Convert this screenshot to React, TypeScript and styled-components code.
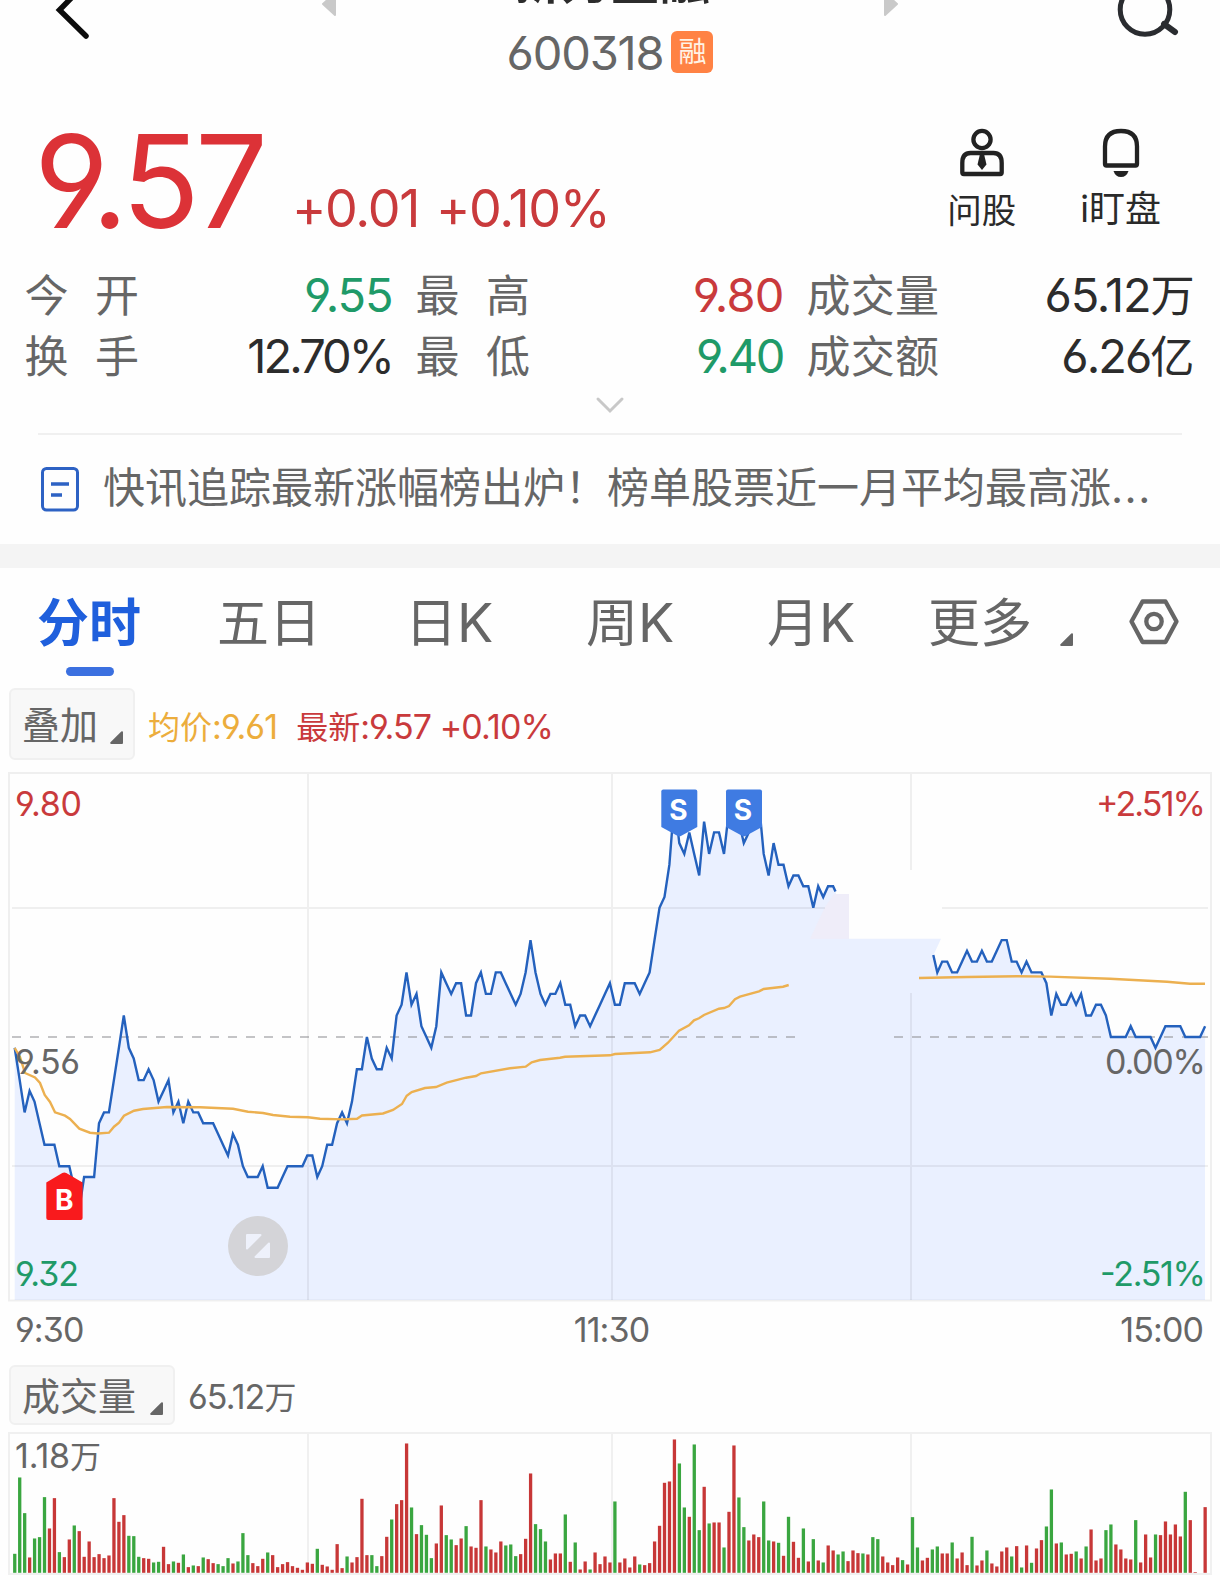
import React from 'react';
import styled, { createGlobalStyle } from 'styled-components';

const C = {
  red: '#dc3237',
  rise: '#c93a3c',
  fall: '#1f9a68',
  blue: '#1f5fdc',
  line: '#2461bd',
  text: '#666',
  dark: '#2c2c2c',
  grid: '#f0f0f0',
};

const Global = createGlobalStyle`
  * { box-sizing: border-box; }
  body {
    margin: 0;
    background: #fff;
    font-family: Inter, "Noto Sans CJK SC", sans-serif;
    font-feature-settings: "cv03", "cv04", "cv09";
    color: ${C.text};
  }
`;

const Screen = styled.main`
  width: 1220px;
  height: 1580px;
  overflow: hidden;
  background: #fefefe;
  display: flex;
  flex-direction: column;
  white-space: nowrap;
`;

/* ---------- header ---------- */
const Header = styled.header`
  height: 100px;
  display: grid;
  grid-template-columns: 321px 96px 1fr 96px 321px;
  flex: none;
`;
const HeaderIcon = styled.svg<{ $end?: boolean }>`
  display: block;
  justify-self: ${p => (p.$end ? 'end' : 'start')};
`;
const TitleBox = styled.div`
  display: flex;
  flex-direction: column;
  align-items: center;
`;
const Title = styled.h1`
  margin: -49px 0 0;
  font-size: 50px;
  line-height: 60px;
  font-weight: 600;
  color: ${C.dark};
`;
const CodeLine = styled.div`
  margin-top: 20px;
  display: flex;
  align-items: center;
  gap: 8px;
`;
const Code = styled.span`
  font-size: 47px;
  line-height: 44px;
  height: 42px;
  letter-spacing: -1.2px;
`;
const Badge = styled.span`
  width: 42px;
  height: 42px;
  border-radius: 6px;
  background: #ff8244;
  color: #fff3e6;
  font-size: 28px;
  line-height: 43px;
  text-align: center;
`;

/* ---------- quote ---------- */
const Quote = styled.section`
  height: 164px;
  flex: none;
  display: flex;
  padding: 0 59px 0 34px;
`;
const Price = styled.div`
  margin-top: 21px;
  font-size: 129px;
  line-height: 120px;
  letter-spacing: -5px;
  color: ${C.red};
`;
const Change = styled.div`
  margin: 79px 0 0 29px;
  display: flex;
  gap: 17px;
  font-size: 52px;
  line-height: 60px;
  letter-spacing: -1.3px;
  color: ${C.rise};
`;
const Actions = styled.div`
  margin-left: auto;
  display: flex;
  gap: 64px;
  padding-top: 28px;
`;
const Action = styled.div<{ $lift?: boolean }>`
  display: flex;
  flex-direction: column;
  align-items: center;
  gap: ${p => (p.$lift ? 12 : 14)}px;
  font-size: ${p => (p.$lift ? 36 : 34.5)}px;
  line-height: 40px;
  color: #2a2a2a;
`;

/* ---------- stats ---------- */
const Stats = styled.section`
  flex: none;
  display: grid;
  grid-template-columns: 367px 367px 387px;
  column-gap: 24px;
  grid-auto-rows: 60.5px;
  padding-left: 25px;
`;
const Stat = styled.div`
  display: flex;
  justify-content: space-between;
  font-size: 44px;
  line-height: 61px;
`;
const StatLabel = styled.span<{ $wide?: boolean }>`
  line-height: 65px;
  margin-left: -0.5px;
  letter-spacing: ${p => (p.$wide ? 26.5 : 0.3)}px;
`;
const StatValue = styled.span<{ $color?: string; $track?: number }>`
  font-size: 47px;
  letter-spacing: ${p => p.$track ?? -1}px;
  margin-right: ${p => -1 - (p.$track ?? -1) * 0.3}px;
  color: ${p => p.$color || C.dark};
`;
const Unit = styled.span`
  font-size: 0.94em;
  letter-spacing: 0;
`;
const Expand = styled.div`
  height: 48px;
  flex: none;
  display: flex;
  justify-content: center;
  padding: 10px 0 0;
`;
const News = styled.section`
  flex: none;
  height: 111px;
  margin: 0 38px;
  border-top: 2px solid #f0f0f0;
  display: flex;
  align-items: flex-start;
  padding: 32px 0 0 3px;
  gap: 24px;
  font-size: 42px;
`;
const NewsText = styled.span`
  line-height: 42px;
`;
const Dots = styled.span`
  letter-spacing: 1.5px;
`;
const Band = styled.div`
  height: 24px;
  flex: none;
  background: #f4f4f4;
`;

/* ---------- tabs ---------- */
const Tabs = styled.nav`
  height: 120px;
  flex: none;
  display: flex;
  align-items: flex-start;
  padding: 22px 0 0 37px;
`;
const Tab = styled.div<{ $w: number; $active?: boolean }>`
  width: ${p => p.$w}px;
  font-size: 52px;
  line-height: 68px;
  font-weight: ${p => (p.$active ? 700 : 400)};
  color: ${p => (p.$active ? C.blue : C.text)};
  &::after {
    content: '';
    display: ${p => (p.$active ? 'block' : 'none')};
    width: 48px;
    height: 9px;
    margin: 9px 0 0 29px;
    border-radius: 5px;
    background: #3b70e0;
  }
`;
const Letter = styled.span`
  font-size: 54px;
  line-height: 1;
`;
const CornerMark = styled.svg`
  display: block;
  flex: none;
`;
const TabCorner = styled.div`
  width: 69px;
  padding-top: 43px;
`;
const Settings = styled.div`
  padding-top: 9px;
`;

/* ---------- chart toolbars ---------- */
const Toolbar = styled.div<{ $h: number }>`
  flex: none;
  height: ${p => p.$h}px;
  display: flex;
  align-items: flex-start;
  padding-left: 9px;
`;
const Picker = styled.button<{ $w: number; $h: number }>`
  width: ${p => p.$w}px;
  height: ${p => p.$h}px;
  border: 2px solid #f0f0f0;
  border-radius: 6px;
  background: #f8f8f8;
  padding: 2px 10px 0 11px;
  display: flex;
  justify-content: space-between;
  align-items: center;
  font: inherit;
  font-size: 38px;
  line-height: 54px;
  color: ${C.text};
`;
const PickerMark = styled.span`
  padding-top: 24px;
`;
const Legend = styled.div<{ $top: number }>`
  display: flex;
  gap: 19px;
  margin: ${p => p.$top}px 0 0 13px;
  font-size: 34px;
  line-height: 40px;
  letter-spacing: -0.9px;
`;
const LegendItem = styled.span<{ $color?: string }>`
  color: ${p => p.$color || C.text};
`;
const Cjk = styled.span`
  font-size: 32px;
  letter-spacing: 0;
`;
const Plot = styled.svg`
  display: block;
  flex: none;
  text { font-size: 34px; }
  .mark { font-size: 28px; font-weight: 700; fill: #fff; }
`;
const Times = styled.div`
  flex: none;
  height: 59px;
  display: grid;
  grid-template-columns: 1fr auto 1fr;
  padding: 3px 17px 0 15px;
  font-size: 34px;
  line-height: 42px;
  letter-spacing: -0.9px;
`;
const Time = styled.span<{ $align?: string }>`
  text-align: ${p => p.$align || 'left'};
  padding-left: ${p => (p.$align === 'center' ? 5 : 0)}px;
`;

/* ---------- data ---------- */
const X0 = 14.7;
const STEP = 4.96;
const xAt = (i: number) => X0 + i * STEP;

/* price in cents relative to the 9.56 close, one value a minute */
const MORNING = [
  -1, -4, -7, -5, -6, -8, -10, -10, -10, -12, -12, -12, -14, -16, -13, -13, -13, -8, -7, -7, -4, -1, 2, -1, -2, -4, -4,
  -3, -4, -6, -5, -4, -7, -6, -8, -6, -7, -7, -8, -8, -8, -9, -10, -11, -9, -10, -12, -13, -13, -13, -12, -14, -14, -14,
  -13, -12, -12, -12, -12, -11, -11, -13, -12, -10, -10, -8, -7, -8, -6, -3, -3, 0, -2, -3, -3, -1, -2, 2, 3, 6, 3, 4,
  1, 0, -1, 1, 6, 5, 4, 5, 5, 2, 2, 5, 6, 4, 4, 6, 6, 5, 4, 3, 4, 6, 9, 6, 4, 3, 4, 4, 5, 3, 3, 1, 2, 2, 1, 2, 3, 4, 5,
  3, 3, 5, 5, 5, 4, 5, 6, 9, 12, 13, 16, 22, 18, 17, 19, 17, 15, 20, 17, 19, 19, 17, 21, 22, 20, 18, 19, 20, 22, 17, 15,
  18, 16, 16, 14, 15, 15, 14, 14, 12, 14, 13, 14, 14,
];
const LATE_START = 186;
const LATE = [
  6, 7, 7, 6, 6, 7, 8, 7, 7, 8, 7, 7, 8, 9, 9, 7, 7, 6, 7, 6, 6, 6, 5, 2, 4, 3, 3, 4, 3, 4, 2, 2, 3, 3, 2, 0, 0, 0, 0,
  1, 0, 0, 0, 0, -1, 0, 1, 1, 1, 1, 0, 0, 0, 0, 1,
];
const TOP = 760;
const yAt = (n: number) => 1037 - TOP - n * 10.77;
const pts = (v: number[], s = 0) => v.map((n, i) => `${xAt(i + s).toFixed(1)},${yAt(n).toFixed(1)}`).join(' ');

const AVG_LEFT: [number, number][] = [
  [14.7, 1048], [20, 1057], [25, 1073], [35, 1077.5], [40, 1083], [44.7, 1095], [50, 1102], [55, 1112.3], [65, 1115.7],
  [70, 1119], [79.3, 1128.7], [90, 1132.7], [98, 1133.5], [109, 1132.7], [114, 1126.7], [119, 1122.7], [124, 1115.7],
  [134, 1110.7], [143, 1109], [167, 1107], [200, 1107.3], [233, 1108.7], [248, 1111.7], [263, 1113], [273, 1115],
  [290, 1116.7], [308, 1117.3], [320, 1118.7], [343, 1119.4], [357, 1118.7], [362, 1115.5], [383, 1113.5], [393, 1110],
  [402, 1104], [406.7, 1095.7], [411.7, 1092], [425, 1088], [436, 1087], [446.7, 1082.7], [466, 1077.7], [476, 1076],
  [481, 1073.3], [510, 1068.3], [525.7, 1066.7], [531.7, 1062.3], [540, 1060], [560, 1057.7], [565, 1056.7],
  [610, 1055.3], [615, 1054], [650, 1052.3], [659.7, 1050], [668, 1042.7], [679, 1030.7], [689, 1025.3], [694, 1020.3],
  [699, 1018.3], [704, 1015], [719, 1008.7], [724, 1008], [729, 1006], [735, 999.3], [740, 996.7], [759, 991.3],
  [763.7, 989], [783, 986.7], [788.7, 985],
];
const AVG_RIGHT: [number, number][] = [
  [919, 978], [967, 977], [1017, 976.3], [1050, 976.6], [1110, 978.7], [1167, 981.7], [1190, 983.7], [1205, 983.7],
];
const path = (a: [number, number][]) => a.map(([x, y]) => `${x},${y - TOP}`).join(' ');

const BASE = 1300 - TOP;
const AREA = [
  `${X0},${BASE}`,
  pts(MORNING),
  path([[836, 893], [836, 894], [849, 894], [849, 938.7], [941, 938.7], [933.5, 955]]),
  pts(LATE, LATE_START),
  `1205,${BASE}`,
].join(' ');

/* traded volume a minute: bar height in thirds of a pixel, with g for a falling minute and r for a rising one */
const VOLUME = `57g 286g 179g 46r 103g 107g 227g 133r 224r 62g 47r 100r 142g 125r 48r 94r 47r 56r 44r 52r 224r 153r 173r
111g 110g 48g 44r 42r 31g 33g 78r 26r 34g 30r 55g 17r 22g 20r 46g 41r 29r 26g 20g 44g 28r 34g 119g 53g 29r 20r 42r 61g
53r 17r 26r 32r 20r 15r 9r 31r 27r 72g 24r 19r 9r 86r 14r 49g 31r 47r 222r 53r 53g 20g 50r 108r 160g 206r 218r 388r
196g 116r 143g 114g 44g 88r 202r 113g 100g 83r 103r 140g 79r 75r 218r 79g 70r 61r 94r 82g 85g 50g 56r 102r 298r 146g
131g 94g 40r 58r 58r 175g 33r 91g 10r 34r 10g 61r 26r 49r 31r 214g 31r 43r 16r 49r 25g 23r 29r 94r 141r 270r 274r 400r
328g 196g 168r 385g 128g 258r 148g 151r 151r 76g 183r 382r 226g 137g 97r 115r 107r 214g 97g 94r 90g 51r 168g 93r 45r
133g 34r 101g 37r 31g 82r 67r 55g 64g 35r 67r 59r 58g 55r 107g 101g 49r 31r 23r 46r 38g 25r 167g 76g 37r 45r 70g 79g
58r 58r 91g 43r 61r 23r 108g 22r 37r 67g 28r 19r 64r 76r 49g 80r 16g 82r 30g 73r 98r 139g 250g 88r 91g 55r 57r 64g 43r
79g 130r 37r 43r 128g 145g 85r 70r 43r 40r 158g 31r 115r 46r 115g 113r 154r 115r 145r 109r 243g 158r 2r 0r 197r`
  .split(/\s+/)
  .map(s => ({ h: parseInt(s, 10) / 3, up: s.endsWith('r') }));

const Corner = () => (
  <CornerMark width="13" height="13" viewBox="0 0 13 13">
    <path d="M12 1.2V12H1.2z" fill="#666" stroke="#666" strokeWidth="2" strokeLinejoin="round" />
  </CornerMark>
);

const Flag = ({ x }: { x: number }) => (
  <g transform={`translate(${x} ${789.5 - TOP})`}>
    <path d="M2 0H34Q36 0 36 2V37.5L20 46.2Q18 47.2 16 46.2L0 37.5V2Q0 0 2 0Z" fill="#3f7be2" />
    <text x="17" y="30.5" textAnchor="middle" className="mark">S</text>
  </g>
);

const PriceChart = () => (
  <Plot width="1220" height="546" viewBox="0 0 1220 546">
    <polygon fill="#eaf0ff" points={AREA} />
    <polygon fill="#efedf9" points={path([[834, 894], [849, 894], [849, 938.7], [810, 938.7], [825, 907]])} />
    <g stroke="#000" strokeOpacity=".058" strokeWidth="2" fill="none">
      <rect x="9" y="13" width="1202" height="527.5" />
      <path d="M308 14V540M612 14V540M911 14V110M911 233V540M12 148H825M942 148H1208M12 406H1208" />
    </g>
    <g stroke="#8a8a8e" strokeOpacity=".5" strokeWidth="2" strokeDasharray="9 9" fill="none">
      <path d="M12 277H796M894 277H1208" />
    </g>
    <g fill="none" strokeWidth="2.4">
      <polyline points={`${pts(MORNING)} 835.5,${891.5 - TOP}`} stroke={C.line} />
      <polyline points={`933.3,${955 - TOP} ${pts(LATE, LATE_START)}`} stroke={C.line} />
      <polyline points={path(AVG_LEFT)} stroke="#ecb050" />
      <polyline points={path(AVG_RIGHT)} stroke="#ecb050" />
    </g>
    <Flag x={661.3} />
    <Flag x={726} />
    <g transform={`translate(46.3 ${1172 - TOP})`}>
      <path d="M0 10.5L16 1Q18 0 20 1L36.3 10.5V46Q36.3 48 34.3 48H2Q0 48 0 46Z" fill="#f91a1d" />
      <text x="18" y="37.5" textAnchor="middle" className="mark">B</text>
    </g>
    <circle cx="258" cy={1246 - TOP} r="30" fill="#d4d4d8" />
    <path
      d="M247 475H260.5L247 488.5zM269 497H255.5L269 483.5z"
      fill="#eef1fb"
      stroke="#eef1fb"
      strokeWidth="2"
      strokeLinejoin="round"
    />
    <text x="15" y="314.3" fill={C.text} textLength="65">9.56</text>
    <text x="15" y="56.2" fill={C.rise} textLength="67">9.80</text>
    <text x="15" y="526.2" fill={C.fall} textLength="64">9.32</text>
    <text x="1096" y="56.2" fill={C.rise} textLength="110">+2.51%</text>
    <text x="1105" y="314.3" fill={C.text} textLength="101">0.00%</text>
    <text x="1100" y="526.2" fill={C.fall} textLength="106">-2.51%</text>
  </Plot>
);

const VolumeChart = () => (
  <Plot width="1220" height="148" viewBox="0 0 1220 148">
    <g stroke={C.grid} strokeWidth="2" fill="none">
      <rect x="9" y="1" width="1202" height="141" />
      <path d="M308 2V142M612 2V142M911 2V142" />
    </g>
    {VOLUME.map((b, i) => (
      <rect key={i} x={xAt(i) - 1.6} y={140.8 - b.h} width="3.3" height={b.h} fill={b.up ? '#c73737' : '#3aa640'} />
    ))}
    <text x="15" y="36" fill={C.text} textLength="86">1.18<tspan fontSize="31">万</tspan></text>
  </Plot>
);

export default function App() {
  return (
    <>
      <Global />
      <Screen>
        <Header>
          <HeaderIcon width="120" height="50" viewBox="0 0 120 50">
            <path d="M86 -17L59.5 10L86 36" fill="none" stroke="#0c0c0c" strokeWidth="5.5" strokeLinecap="round" />
          </HeaderIcon>
          <HeaderIcon width="16" height="20" viewBox="0 0 16 20">
            <path d="M2 4L14 -7V15z" fill="#c9c9c9" stroke="#c9c9c9" strokeWidth="2" strokeLinejoin="round" />
          </HeaderIcon>
          <TitleBox>
            <Title>新力金融</Title>
            <CodeLine>
              <Code>600318</Code>
              <Badge>融</Badge>
            </CodeLine>
          </TitleBox>
          <HeaderIcon $end width="16" height="20" viewBox="0 0 16 20">
            <path d="M14 4L2 -7V15z" fill="#c9c9c9" stroke="#c9c9c9" strokeWidth="2" strokeLinejoin="round" />
          </HeaderIcon>
          <HeaderIcon $end width="120" height="50" viewBox="1100 0 120 50">
            <circle cx="1145" cy="9.5" r="24.8" fill="none" stroke="#2a2c30" strokeWidth="5" />
            <path d="M1164 24L1175 32" stroke="#2a2c30" strokeWidth="6" strokeLinecap="round" />
          </HeaderIcon>
        </Header>

        <Quote>
          <Price>9.57</Price>
          <Change>
            <span>+0.01</span>
            <span>+0.10%</span>
          </Change>
          <Actions>
            <Action>
              <svg width="48" height="49" viewBox="0 0 48 49" fill="none" stroke="#222" strokeWidth="4.3">
                <circle cx="24" cy="11.5" r="8.6" />
                <path d="M12.5 25H35.5Q43.7 25 43.7 35V44.5Q43.7 46 42.2 46H5.8Q4.3 46 4.3 44.5V35Q4.3 25 12.5 25Z" />
                <path d="M22 26H26L28.5 36.5L24 42L19.5 36.5z" fill="#222" stroke="none" />
              </svg>
              问股
            </Action>
            <Action $lift>
              <svg width="48" height="49" viewBox="0 0 48 49">
                <path
                  d="M8 36V18.5Q8 3 24 3Q40 3 40 18.5V36Q40 37.5 38.5 37.5H9.5Q8 37.5 8 36Z"
                  fill="none"
                  stroke="#222"
                  strokeWidth="4.3"
                />
                <path d="M16.5 43H31.5Q29.5 49 24 49Q18.5 49 16.5 43Z" fill="#222" />
              </svg>
              i盯盘
            </Action>
          </Actions>
        </Quote>

        <Stats>
          <Stat><StatLabel $wide>今开</StatLabel><StatValue $color={C.fall}>9.55</StatValue></Stat>
          <Stat><StatLabel $wide>最高</StatLabel><StatValue $color={C.rise} $track={-0.7}>9.80</StatValue></Stat>
          <Stat><StatLabel>成交量</StatLabel><StatValue $track={-1.2}>65.12<Unit>万</Unit></StatValue></Stat>
          <Stat><StatLabel $wide>换手</StatLabel><StatValue $track={-2.9}>12.70%</StatValue></Stat>
          <Stat><StatLabel $wide>最低</StatLabel><StatValue $color={C.fall} $track={-2.2}>9.40</StatValue></Stat>
          <Stat><StatLabel>成交额</StatLabel><StatValue $track={-2}>6.26<Unit>亿</Unit></StatValue></Stat>
        </Stats>
        <Expand>
          <svg width="30" height="20" viewBox="0 0 30 20">
            <path d="M3 4L15 16L27 4" fill="none" stroke="#c8c8c8" strokeWidth="3" strokeLinecap="round" />
          </svg>
        </Expand>

        <News>
          <svg width="38" height="45" viewBox="0 0 38 45" fill="none" stroke="#2d62c4">
            <rect x="1.5" y="1.5" width="35" height="41.5" rx="4" strokeWidth="3" />
            <path d="M10 17H28M10 28H21" strokeWidth="3.5" />
          </svg>
          <NewsText>快讯追踪最新涨幅榜出炉！榜单股票近一月平均最高涨<Dots>...</Dots></NewsText>
        </News>
        <Band />

        <Tabs>
          <Tab $w={180} $active>分时</Tab>
          <Tab $w={188}>五日</Tab>
          <Tab $w={181}>日<Letter>K</Letter></Tab>
          <Tab $w={181}>周<Letter>K</Letter></Tab>
          <Tab $w={161}>月<Letter>K</Letter></Tab>
          <Tab $w={132}>更多</Tab>
          <TabCorner><Corner /></TabCorner>
          <Settings>
            <svg width="50" height="46" viewBox="0 0 50 46" fill="none" stroke="#666" strokeWidth="4.3" strokeLinejoin="round">
              <path d="M13.5 2.5H36.5L47.5 22.5L36.5 43H13.5L2.5 22.5z" />
              <circle cx="25" cy="22.5" r="7.7" />
            </svg>
          </Settings>
        </Tabs>

        <Toolbar $h={72}>
          <Picker $w={126} $h={72}>叠加<PickerMark><Corner /></PickerMark></Picker>
          <Legend $top={19}>
            <LegendItem $color="#ecad3c"><Cjk>均价</Cjk>:9.61</LegendItem>
            <LegendItem $color={C.rise}><Cjk>最新</Cjk>:9.57 +0.10%</LegendItem>
          </Legend>
        </Toolbar>
        <PriceChart />
        <Times>
          <Time>9:30</Time>
          <Time $align="center">11:30</Time>
          <Time $align="right">15:00</Time>
        </Times>
        <Toolbar $h={67}>
          <Picker $w={166} $h={60}>成交量<PickerMark><Corner /></PickerMark></Picker>
          <Legend $top={12}>
            <LegendItem>65.12<Cjk>万</Cjk></LegendItem>
          </Legend>
        </Toolbar>
        <VolumeChart />
      </Screen>
    </>
  );
}
